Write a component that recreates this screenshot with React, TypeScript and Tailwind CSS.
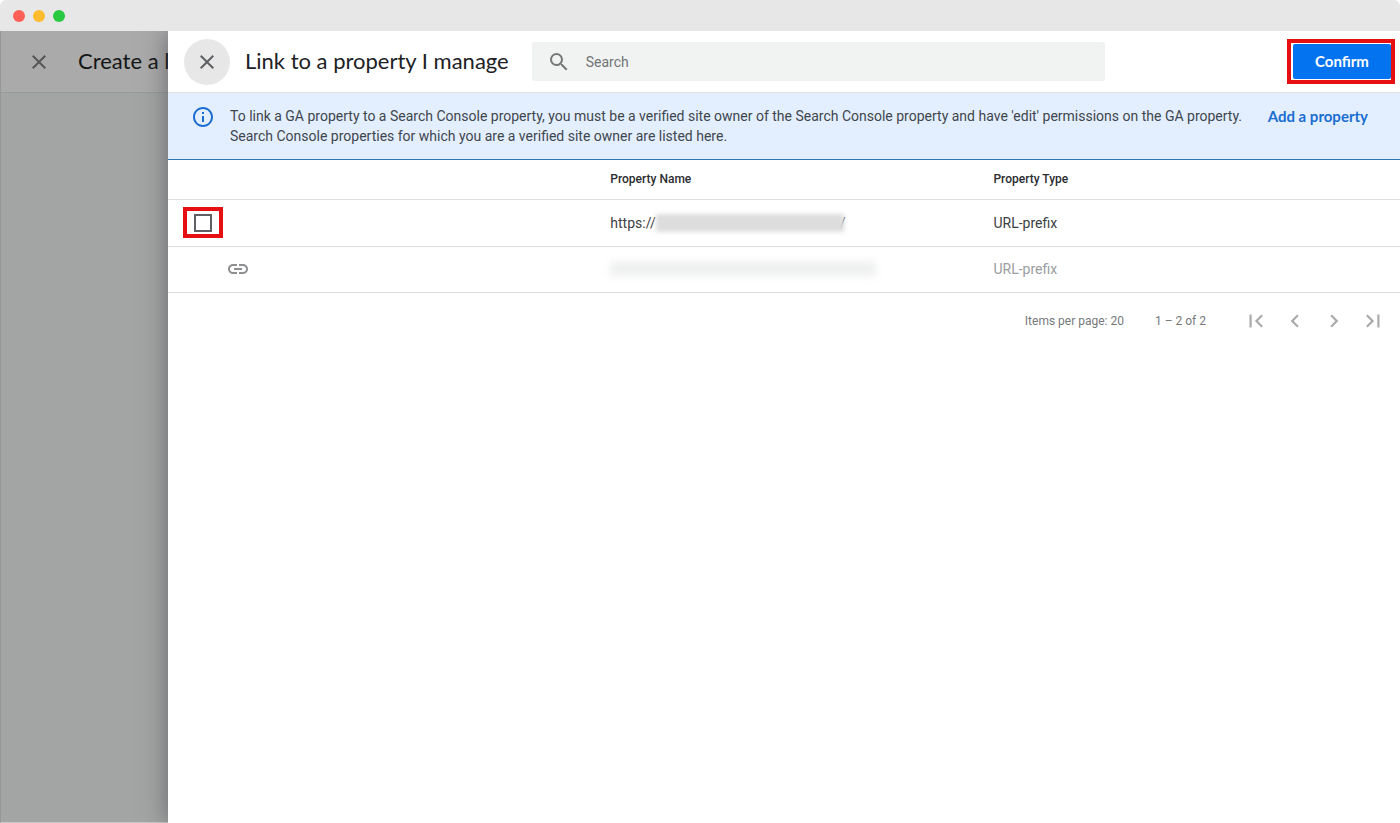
import React from "react";
import {
  MdChevronLeft,
  MdChevronRight,
  MdClose,
  MdFirstPage,
  MdInfoOutline,
  MdLastPage,
  MdLink,
  MdSearch,
} from "react-icons/md";

function WindowBar() {
  return (
    <div className="flex h-[31px] shrink-0 items-center gap-2 rounded-t-md bg-[#e7e7e7] px-[13px]">
      <span className="size-3 rounded-full bg-[#ff5f57]" />
      <span className="size-3 rounded-full bg-[#febb2e]" />
      <span className="size-3 rounded-full bg-[#28c840]" />
    </div>
  );
}

function DimmedPage() {
  return (
    <div className="w-[12%] shrink-0 overflow-hidden border-b border-l border-b-[#c9c9c9] border-l-[#969797] bg-[#a3a5a4]">
      <div className="flex h-[62px] items-center gap-[27px] border-b border-[#989a9a] bg-[#aaaaaa] pl-[26px] whitespace-nowrap">
        <button type="button" aria-label="Close" className="text-[#555657]">
          <MdClose size={24} />
        </button>
        <h1 className="pb-[2px] font-['Lato',sans-serif] text-[22px] leading-7 text-[#151617]">Create a link</h1>
      </div>
    </div>
  );
}

function DrawerHeader() {
  return (
    <header className="flex h-[62px] items-center border-b border-[#dfe3ea] pr-[5px] pl-4">
      <button
        type="button"
        aria-label="Close panel"
        className="flex size-[46px] shrink-0 items-center justify-center rounded-full bg-[#e7e7e7] text-[#5f6063]"
      >
        <MdClose size={24} />
      </button>
      <h2 className="ml-[15px] shrink-0 pb-[2px] font-['Lato',sans-serif] text-[22px] leading-7 whitespace-nowrap text-[#202124]">
        Link to a property I manage
      </h2>
      <label className="ml-[23px] flex h-[39px] max-w-[573px] flex-1 items-center gap-[15px] rounded-xs bg-[#f1f3f3] pl-[15px]">
        <MdSearch size={24} className="shrink-0 text-[#757779]" />
        <input
          type="text"
          placeholder="Search"
          aria-label="Search"
          className="min-w-0 flex-1 bg-transparent text-sm text-[#202124] outline-none placeholder:text-[#717476]"
        />
      </label>
      <div className="ml-auto border-4 border-[#e60f12] py-px pl-[2px]">
        <button
          type="button"
          className="block h-[35px] w-[98px] rounded-xs bg-[#0473ef] font-['Lato',sans-serif] text-[15px] font-bold text-white"
        >
          Confirm
        </button>
      </div>
    </header>
  );
}

function InfoBanner() {
  return (
    <div className="flex h-[67px] items-start border-b border-[#2f76ad] bg-[#e3effe] pt-3 pr-8 pl-[23px]">
      <MdInfoOutline size={24} className="shrink-0 text-[#1a6dd0]" />
      <p className="mt-px ml-[15px] text-sm leading-5 text-[#3f464e]">
        To link a GA property to a Search Console property, you must be a verified site owner of the Search Console
        property and have 'edit' permissions on the GA property.
        <br />
        Search Console properties for which you are a verified site owner are listed here.
      </p>
      <a
        href="#add"
        className="mt-px ml-auto shrink-0 font-['Lato',sans-serif] text-[15px] leading-5 font-bold text-[#1a6dd0]"
      >
        Add a property
      </a>
    </div>
  );
}

function PropertyTable() {
  return (
    <table className="w-full table-fixed border-collapse text-left">
      <thead>
        <tr className="h-[39px] border-b border-[#dedfe0] text-xs text-[#2b2d30]">
          <th className="w-[35.9%] p-0" aria-label="Selection" />
          <th className="w-[31.1%] p-0 font-medium">Property Name</th>
          <th className="p-0 font-medium">Property Type</th>
        </tr>
      </thead>
      <tbody className="text-sm">
        <tr className="h-[47px] border-b border-[#dedfe0] text-[#3c4043]">
          <td className="p-0 pl-[15px]">
            <label className="flex h-[31px] w-10 items-center justify-center border-4 border-[#e60f12]">
              <input
                type="checkbox"
                aria-label="Select property"
                className="size-[18px] appearance-none border-2 border-[#5f6063] bg-white checked:bg-[#1a6dd0]"
              />
            </label>
          </td>
          <td className="p-0">
            <div className="flex items-center">
              <span>https://</span>
              <span className="relative -mr-1 h-[18px] w-[188px] bg-[#dddddd] blur-[2px]" />
              <span>/</span>
            </div>
          </td>
          <td className="p-0">URL-prefix</td>
        </tr>
        <tr className="h-[46px] border-b border-[#dedfe0] text-[#9b9d9f]">
          <td className="p-0 pl-[58px]">
            <MdLink size={24} className="text-[#8d8f91]" />
          </td>
          <td className="p-0">
            <div className="h-[14px] w-[266px] bg-[#eeefef] blur-[4px]" />
          </td>
          <td className="p-0">URL-prefix</td>
        </tr>
      </tbody>
    </table>
  );
}

function Paginator() {
  return (
    <nav aria-label="Pagination" className="flex h-14 items-center justify-end pr-[14px] text-xs text-[#77797b]">
      <span>Items per page: 20</span>
      <span className="ml-[31px]">1 – 2 of 2</span>
      <div className="ml-[37px] flex gap-[13px] text-[#a9aaab]">
        <button type="button" aria-label="First page">
          <MdFirstPage size={26} />
        </button>
        <button type="button" aria-label="Previous page">
          <MdChevronLeft size={26} />
        </button>
        <button type="button" aria-label="Next page">
          <MdChevronRight size={26} />
        </button>
        <button type="button" aria-label="Last page">
          <MdLastPage size={26} />
        </button>
      </div>
    </nav>
  );
}

export default function App() {
  return (
    <div className="flex min-h-screen flex-col bg-white font-['Roboto',sans-serif]">
      <WindowBar />
      <div className="flex flex-1 overflow-hidden">
        <DimmedPage />
        <main className="min-w-0 flex-1 bg-white shadow-[0_0_24px_rgba(50,50,60,0.55)]">
          <DrawerHeader />
          <InfoBanner />
          <PropertyTable />
          <Paginator />
        </main>
      </div>
    </div>
  );
}
